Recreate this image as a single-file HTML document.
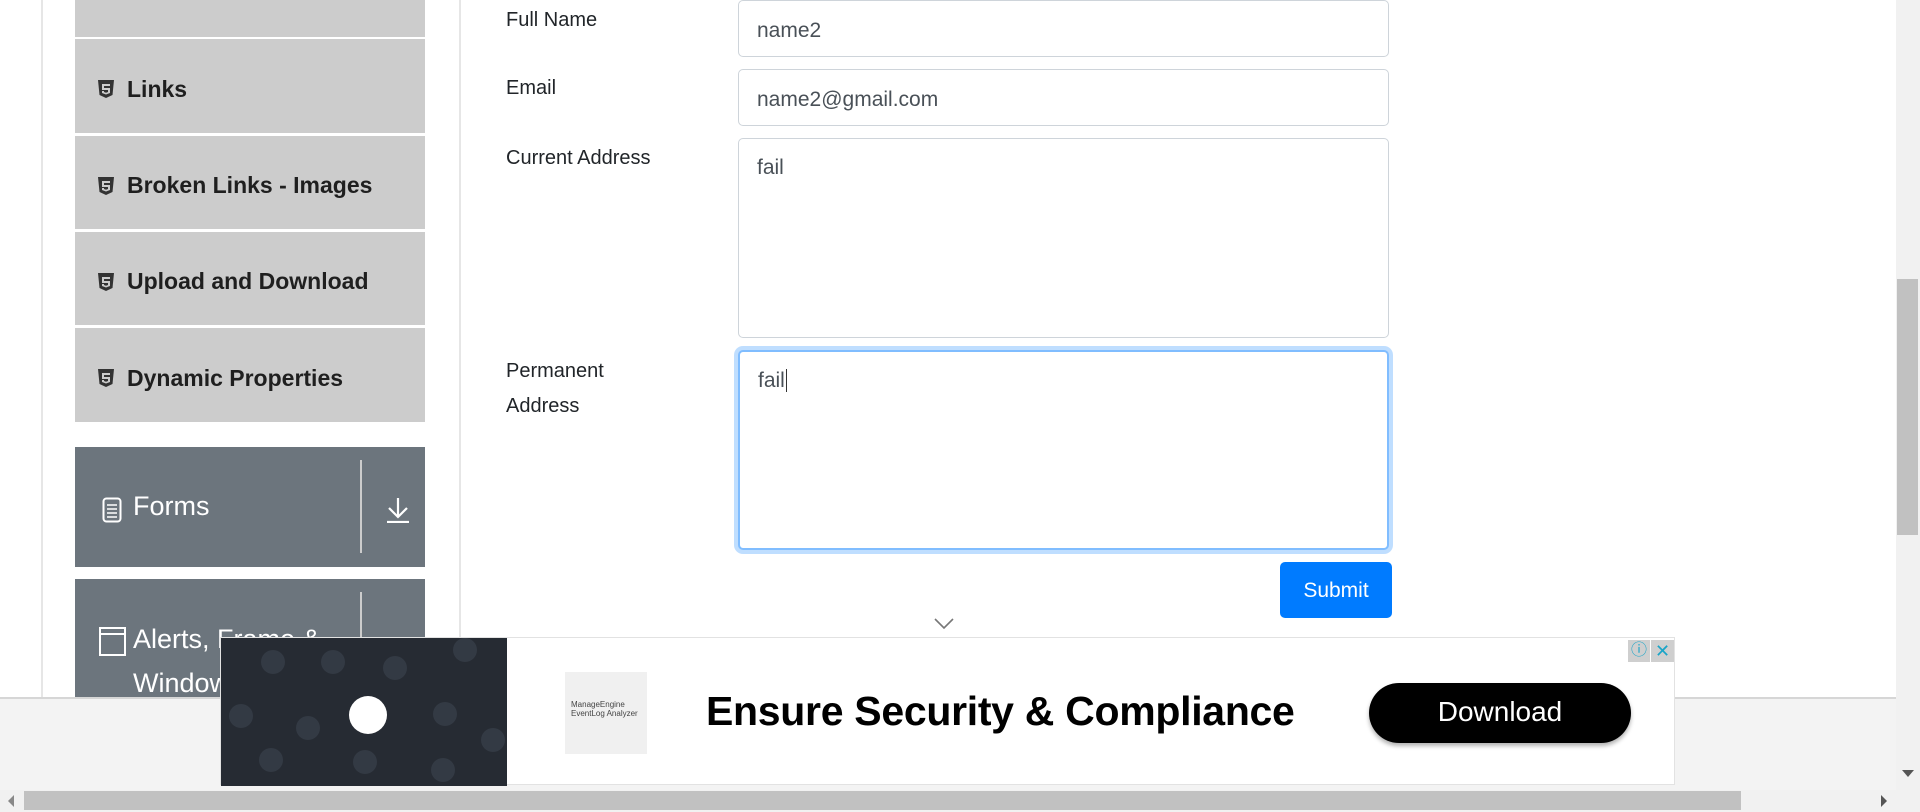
<!DOCTYPE html>
<html><head><meta charset="utf-8"><style>
*{box-sizing:border-box;margin:0;padding:0}
body{width:1920px;height:812px;overflow:hidden;background:#fff;font-family:"Liberation Sans",sans-serif;color:#212529;position:relative}
.a{position:absolute}
.item{position:absolute;left:75px;width:350px;background:#ccc;font-weight:bold;font-size:23px;color:#1f1f1f;display:flex;align-items:center;padding-left:22px;padding-top:6px}
.item svg{margin-right:12px}
.lbl{position:absolute;left:506px;font-size:20px;color:#212529}
.inp{position:absolute;left:738px;width:651px;border:1px solid #ced4da;border-radius:5px;font-size:21px;color:#495057;padding:18px 18px 12px;background:#fff}
.grp{position:absolute;left:75px;width:350px;background:#6c757d;color:#fff}
</style></head><body>
<div class="a" style="left:41px;top:0;width:2px;height:697px;background:#e6e6e6"></div>
<div class="a" style="left:459px;top:0;width:2px;height:697px;background:#e6e6e6"></div>

<div class="item" style="top:0;height:37px"></div>
<div class="item" style="top:39px;height:94px"><svg width="18" height="20" viewBox="0 0 18 20"><path d="M1 1h16l-1.5 15L9 19l-6.5-3z" fill="#333"/><path d="M5 5h8v2H7v2h6v5l-4 1.5L5 14v-2h2v1l2 .7 2-.7v-2H5z" fill="#ccc"/></svg>Links</div>
<div class="item" style="top:136px;height:93px"><svg width="18" height="20" viewBox="0 0 18 20"><path d="M1 1h16l-1.5 15L9 19l-6.5-3z" fill="#333"/><path d="M5 5h8v2H7v2h6v5l-4 1.5L5 14v-2h2v1l2 .7 2-.7v-2H5z" fill="#ccc"/></svg>Broken Links - Images</div>
<div class="item" style="top:232px;height:93px"><svg width="18" height="20" viewBox="0 0 18 20"><path d="M1 1h16l-1.5 15L9 19l-6.5-3z" fill="#333"/><path d="M5 5h8v2H7v2h6v5l-4 1.5L5 14v-2h2v1l2 .7 2-.7v-2H5z" fill="#ccc"/></svg>Upload and Download</div>
<div class="item" style="top:328px;height:94px"><svg width="18" height="20" viewBox="0 0 18 20"><path d="M1 1h16l-1.5 15L9 19l-6.5-3z" fill="#333"/><path d="M5 5h8v2H7v2h6v5l-4 1.5L5 14v-2h2v1l2 .7 2-.7v-2H5z" fill="#ccc"/></svg>Dynamic Properties</div>

<div class="grp" style="top:447px;height:120px">
 <svg class="a" style="left:27px;top:50px" width="20" height="26" viewBox="0 0 20 26"><rect x="1.5" y="1.5" width="17" height="23" rx="3" fill="none" stroke="#fff" stroke-width="2"/><path d="M5 8h10M5 12h10M5 16h10M5 20h10" stroke="#fff" stroke-width="1.6"/></svg>
 <div class="a" style="left:58px;top:44px;font-size:27px">Forms</div>
 <div class="a" style="left:285px;top:13px;width:2px;height:93px;background:#ccc"></div>
 <svg class="a" style="left:311px;top:50px" width="24" height="26" viewBox="0 0 24 26"><path d="M12 1v19M3 11l9 9 9-9M1 25h22" stroke="#fff" stroke-width="2.2" fill="none"/></svg>
</div>
<div class="grp" style="top:579px;height:130px">
 <svg class="a" style="left:24px;top:48px" width="27" height="29" viewBox="0 0 27 29"><rect x="1" y="1" width="25" height="27" fill="none" stroke="#fff" stroke-width="2"/><path d="M1 7h25" stroke="#fff" stroke-width="2"/></svg>
 <div class="a" style="left:58px;top:38px;font-size:27px;line-height:44px;white-space:nowrap">Alerts, Frame &amp;<br>Windows</div>
 <div class="a" style="left:285px;top:13px;width:2px;height:100px;background:#ccc"></div>
</div>

<div class="lbl" style="top:9px">Full Name</div>
<div class="inp" style="top:0;height:57px">name2</div>
<div class="lbl" style="top:77px">Email</div>
<div class="inp" style="top:69px;height:57px">name2@gmail.com</div>
<div class="lbl" style="top:147px">Current Address</div>
<div class="inp" style="top:138px;height:200px;padding-top:17px">fail</div>
<div class="lbl" style="top:354px;line-height:35px">Permanent<br>Address</div>
<div class="inp" style="top:350px;height:200px;padding-top:17px;border:2px solid #80bdff;box-shadow:0 0 0 4px rgba(0,123,255,.25)">fail<span style="border-left:1px solid #333;margin-left:1px"></span></div>
<div class="a" style="left:1280px;top:562px;width:112px;height:56px;background:#007bff;border-radius:5px;color:#fff;font-size:21px;text-align:center;line-height:58px">Submit</div>
<svg class="a" style="left:934px;top:618px" width="20" height="12" viewBox="0 0 20 12"><path d="M1 1l9 9 9-9" stroke="#777" stroke-width="1.6" fill="none"/></svg>

<div class="a" style="left:0;top:697px;width:1896px;height:93px;background:#f3f3f3;border-top:2px solid #d6d6d6"></div>
<div class="a" style="left:1896px;top:0;width:24px;height:790px;background:#f1f1f1"></div>
<div class="a" style="left:1897px;top:279px;width:21px;height:256px;background:#c1c1c1"></div>
<div class="a" style="left:1902px;top:770px;border:6px solid transparent;border-top:7px solid #555"></div>
<div class="a" style="left:0;top:790px;width:1920px;height:22px;background:#f1f1f1"></div>
<div class="a" style="left:24px;top:791px;width:1717px;height:19px;background:#c1c1c1"></div>
<div class="a" style="left:8px;top:795px;border:6px solid transparent;border-right:6px solid #888;border-left:0"></div>
<div class="a" style="left:1881px;top:795px;border:6px solid transparent;border-left:6px solid #555;border-right:0"></div>

<div class="a" style="left:220px;top:637px;width:1455px;height:148px;background:#fff;border:1px solid #e2e2e2">
 <div class="a" style="left:0;top:0;width:286px;height:148px;background:#262b33">
  <div class="a" style="left:128px;top:58px;width:38px;height:38px;border-radius:50%;background:#fff"></div>
  <div class="a" style="left:40px;top:12px;width:24px;height:24px;border-radius:50%;background:#333a44"></div>
  <div class="a" style="left:100px;top:12px;width:24px;height:24px;border-radius:50%;background:#333a44"></div>
  <div class="a" style="left:162px;top:18px;width:24px;height:24px;border-radius:50%;background:#333a44"></div>
  <div class="a" style="left:232px;top:0;width:24px;height:24px;border-radius:50%;background:#333a44"></div>
  <div class="a" style="left:8px;top:66px;width:24px;height:24px;border-radius:50%;background:#333a44"></div>
  <div class="a" style="left:75px;top:78px;width:24px;height:24px;border-radius:50%;background:#333a44"></div>
  <div class="a" style="left:212px;top:64px;width:24px;height:24px;border-radius:50%;background:#333a44"></div>
  <div class="a" style="left:260px;top:90px;width:24px;height:24px;border-radius:50%;background:#333a44"></div>
  <div class="a" style="left:38px;top:110px;width:24px;height:24px;border-radius:50%;background:#333a44"></div>
  <div class="a" style="left:132px;top:112px;width:24px;height:24px;border-radius:50%;background:#333a44"></div>
  <div class="a" style="left:210px;top:120px;width:24px;height:24px;border-radius:50%;background:#333a44"></div>
 </div>
 <div class="a" style="left:344px;top:34px;width:82px;height:82px;background:#f0f0f0;font-size:8px;color:#444;padding:28px 6px">ManageEngine<br>EventLog Analyzer</div>
 <div class="a" style="left:485px;top:50px;font-size:41px;font-weight:bold;color:#000;white-space:nowrap;letter-spacing:-0.3px">Ensure Security &amp; Compliance</div>
 <div class="a" style="left:1148px;top:45px;width:262px;height:60px;background:#000;border-radius:30px;color:#fff;font-size:28px;text-align:center;line-height:58px;box-shadow:0 3px 4px rgba(0,0,0,.3)">Download</div>
 <div class="a" style="left:1407px;top:2px;width:22px;height:22px;background:#cfcfcf;color:#1aa5c8;font-size:16px;text-align:center;line-height:22px">ⓘ</div>
 <div class="a" style="left:1430px;top:2px;width:23px;height:22px;background:#cfcfcf;color:#1aa5c8;font-size:18px;text-align:center;line-height:22px">✕</div>
</div>
</body></html>
